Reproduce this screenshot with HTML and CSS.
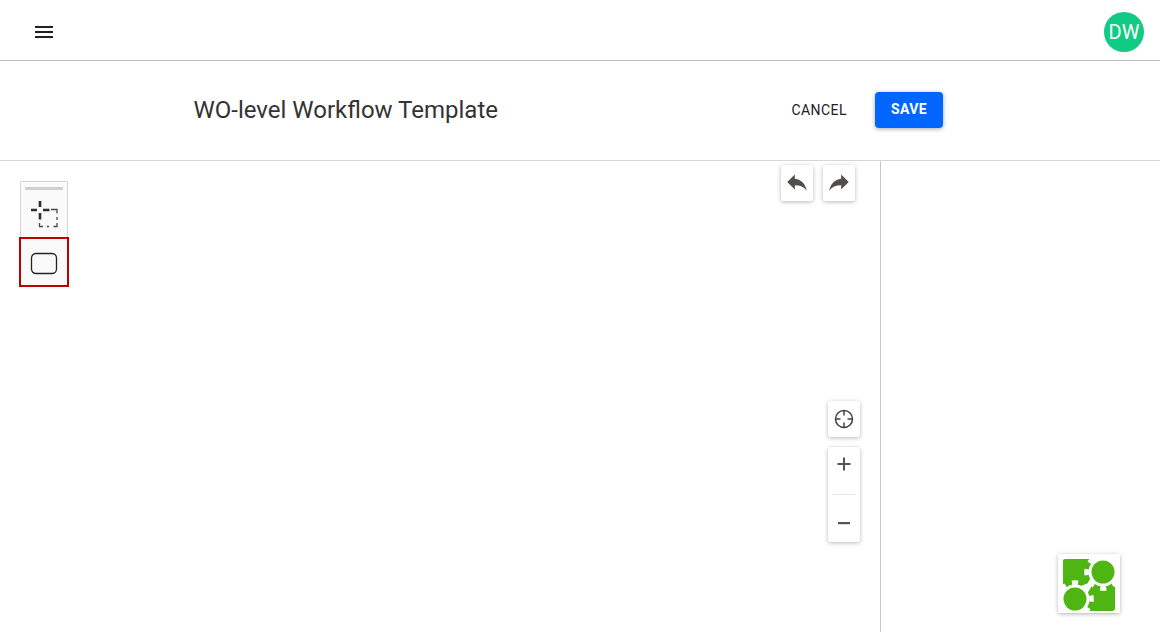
FILE: index.html
```html
<!DOCTYPE html>
<html lang="en">
<head>
<meta charset="utf-8">
<title>WO-level Workflow Template</title>
<link rel="stylesheet" href="styles.css">
</head>
<body>
<div class="app">
  <header class="topbar">
    <button class="menu-btn" aria-label="Menu">
      <svg width="24" height="24" viewBox="0 0 24 24"><path d="M3 18h18v-2H3v2zm0-5h18v-2H3v2zm0-7v2h18V6H3z"/></svg>
    </button>
    <div class="avatar">DW</div>
  </header>
  <section class="titlebar">
    <h1 class="title">WO-level Workflow Template</h1>
    <button class="btn-text">CANCEL</button>
    <button class="btn-save">SAVE</button>
  </section>
  <main class="workspace">
    <div class="canvas">
      <div class="palette">
        <div class="palette-grip"></div>
        <div class="palette-tool">
          <svg width="28" height="28" viewBox="0 0 28 28" fill="none">
            <path d="M10 1v6M10 13v6.500M1 10h6M13 10h6.500" stroke="#2c2c34" stroke-width="2.600"/>
            <path d="M21 9.500h6v4M27 17v3M27 23v3.500h-3.500M19 26.500h-2M13 26.500H9.500V23" stroke="#4a4a4a" stroke-width="1.300"/>
          </svg>
        </div>
        <div class="palette-shape">
          <svg width="28" height="23" viewBox="0 0 28 23" fill="none"><rect x="1.500" y="1.500" width="25" height="20" rx="4.500" stroke="#22242a" stroke-width="1.300"/></svg>
        </div>
      </div>
      <div class="history">
        <button class="tool-btn" aria-label="Undo">
          <svg width="26" height="26" viewBox="0 0 24 24"><path d="M10 9V5l-7 7 7 7v-4.100c5 0 8.500 1.600 11 5.100-1-5-4-10-11-11z"/></svg>
        </button>
        <button class="tool-btn" aria-label="Redo">
          <svg width="26" height="26" viewBox="0 0 24 24"><path d="M14 9V5l7 7-7 7v-4.100c-5 0-8.500 1.600-11 5.100 1-5 4-10 11-11z"/></svg>
        </button>
      </div>
      <div class="zoom-tools">
        <button class="tool-btn center-btn" aria-label="Center">
          <svg width="20" height="20" viewBox="0 0 20 20" fill="none" stroke="#444" stroke-width="1.500"><circle cx="10" cy="10" r="8.500"/><path d="M10 1.500v5M10 13.500v5M1.500 10h5M13.500 10h5"/></svg>
        </button>
        <div class="zoom-group">
          <button class="zoom-btn zoom-in" aria-label="Zoom in">
            <svg width="14" height="14" viewBox="0 0 14 14"><path d="M6 0.500h2v5.500h5.500v2H8v5.500H6V8H0.500V6H6z" fill="#555"/></svg>
          </button>
          <div class="zoom-divider"></div>
          <button class="zoom-btn zoom-out" aria-label="Zoom out">
            <svg width="14" height="14" viewBox="0 0 14 14"><path d="M1 6h12v2.200H1z" fill="#555"/></svg>
          </button>
        </div>
      </div>
    </div>
    <aside class="side">
      <div class="logo">
        <svg width="62" height="59" viewBox="0 0 62 59">
          <path d="M7 5H36V18L29.500 29.500L20 33H5V7Q5 5 7 5Z" fill="#4fb512"/>
          <path d="M57 24V54Q57 57 54 57H28V42L33.500 32L46 24Z" fill="#4fb512"/>
          <g class="gear">
            <circle cx="45" cy="18" r="14.500"/>
            <circle class="teeth" cx="45" cy="18" r="16.500" transform="rotate(-12 45 18)"/>
            <circle cx="17" cy="45" r="14.500"/>
            <circle class="teeth" cx="17" cy="45" r="16.500" transform="rotate(-12 17 45)"/>
          </g>
          <circle cx="45" cy="18" r="11.500" fill="#4fb512"/>
          <circle cx="17" cy="45" r="11.500" fill="#4fb512"/>
        </svg>
      </div>
    </aside>
  </main>
</div>
</body>
</html>
```
FILE: styles.css
```css
* { box-sizing: border-box; }
html, body { margin: 0; height: 100%; overflow: hidden; background: #fff; }
body { font-family: Roboto, "Liberation Sans", sans-serif; color: #2b2b2b; }
button { font-family: inherit; border: 0; background: none; padding: 0; cursor: pointer; }
.app { height: 632px; display: flex; flex-direction: column; }

.topbar { height: 61px; flex: none; display: flex; align-items: center; justify-content: space-between; padding: 4px 16px 0 32px; border-bottom: 1px solid #bdbdbd; }
.menu-btn { width: 24px; height: 24px; display: flex; }
.menu-btn path { fill: #212121; }
.avatar { width: 40px; height: 40px; border-radius: 50%; background: #0fcb83; color: #fff; font-size: 20px; display: flex; align-items: center; justify-content: center; }

.titlebar { height: 100px; flex: none; display: flex; align-items: center; padding: 0 217px 2px 193.500px; border-bottom: 1px solid #d6d6d6; }
.title { flex: 1; margin: 0; font-size: 24px; font-weight: 400; line-height: 32px; color: #333; }
.btn-text { font-size: 14px; font-weight: 400; letter-spacing: 0.45px; color: #212121; margin-right: 28px; }
.btn-save { width: 68px; height: 36px; padding-bottom: 2px; border-radius: 4px; background: #0066ff; color: #fff; font-size: 14px; font-weight: 700; letter-spacing: 0.4px; box-shadow: 0 1px 4px rgba(0,0,0,.35); }

.workspace { flex: 1; display: flex; min-height: 0; }
.canvas { position: relative; width: 881px; flex: none; border-right: 1px solid #c8c8c8; }
.side { position: relative; flex: 1; }

.palette { position: absolute; left: 20px; top: 20px; width: 48px; background: #fafafa; border: 1px solid #d4d4d4; border-bottom: 0; border-radius: 2px 2px 0 0; display: flex; flex-direction: column; align-items: center; }
.palette-grip { width: 38px; height: 3px; margin-top: 5px; background: #cfcfcf; flex: none; }
.palette-tool { height: 47px; width: 100%; display: flex; align-items: flex-start; justify-content: center; padding-top: 10px; }
.palette-shape { position: relative; width: 50px; height: 50px; margin: 0 -2px -1px; padding-top: 2px; border: 2px solid #c00000; background: #fafafa; display: flex; align-items: center; justify-content: center; flex: none; }

.history { position: absolute; top: 4px; left: 781px; display: flex; gap: 10px; }
.tool-btn { width: 32px; height: 36px; padding-bottom: 2px; background: #fff; border-radius: 2px; box-shadow: 0 1px 4px rgba(0,0,0,.28); display: flex; align-items: center; justify-content: center; }
.tool-btn path { fill: #524e4a; }
.center-btn { padding-bottom: 0; }
.center-btn path { fill: none; }

.zoom-tools { position: absolute; top: 240px; left: 828px; display: flex; flex-direction: column; gap: 10px; }
.zoom-group { width: 32px; height: 95px; background: #fff; border-radius: 2px; box-shadow: 0 1px 4px rgba(0,0,0,.28); display: flex; flex-direction: column; align-items: center; }
.zoom-btn { width: 32px; height: 47px; display: flex; align-items: center; justify-content: center; }
.zoom-in { padding-bottom: 13px; }
.zoom-out { padding-top: 9px; }
.zoom-divider { width: 22px; height: 1px; background: #e8e8e8; flex: none; }

.logo { position: absolute; left: 177px; top: 393px; width: 62px; height: 59px; background: #fff; box-shadow: 0 1px 4px rgba(0,0,0,.3); display: flex; }
.gear circle { fill: #fff; }
.gear .teeth { fill: none; stroke: #fff; stroke-width: 4.500; stroke-dasharray: 6 6.960; }
```
